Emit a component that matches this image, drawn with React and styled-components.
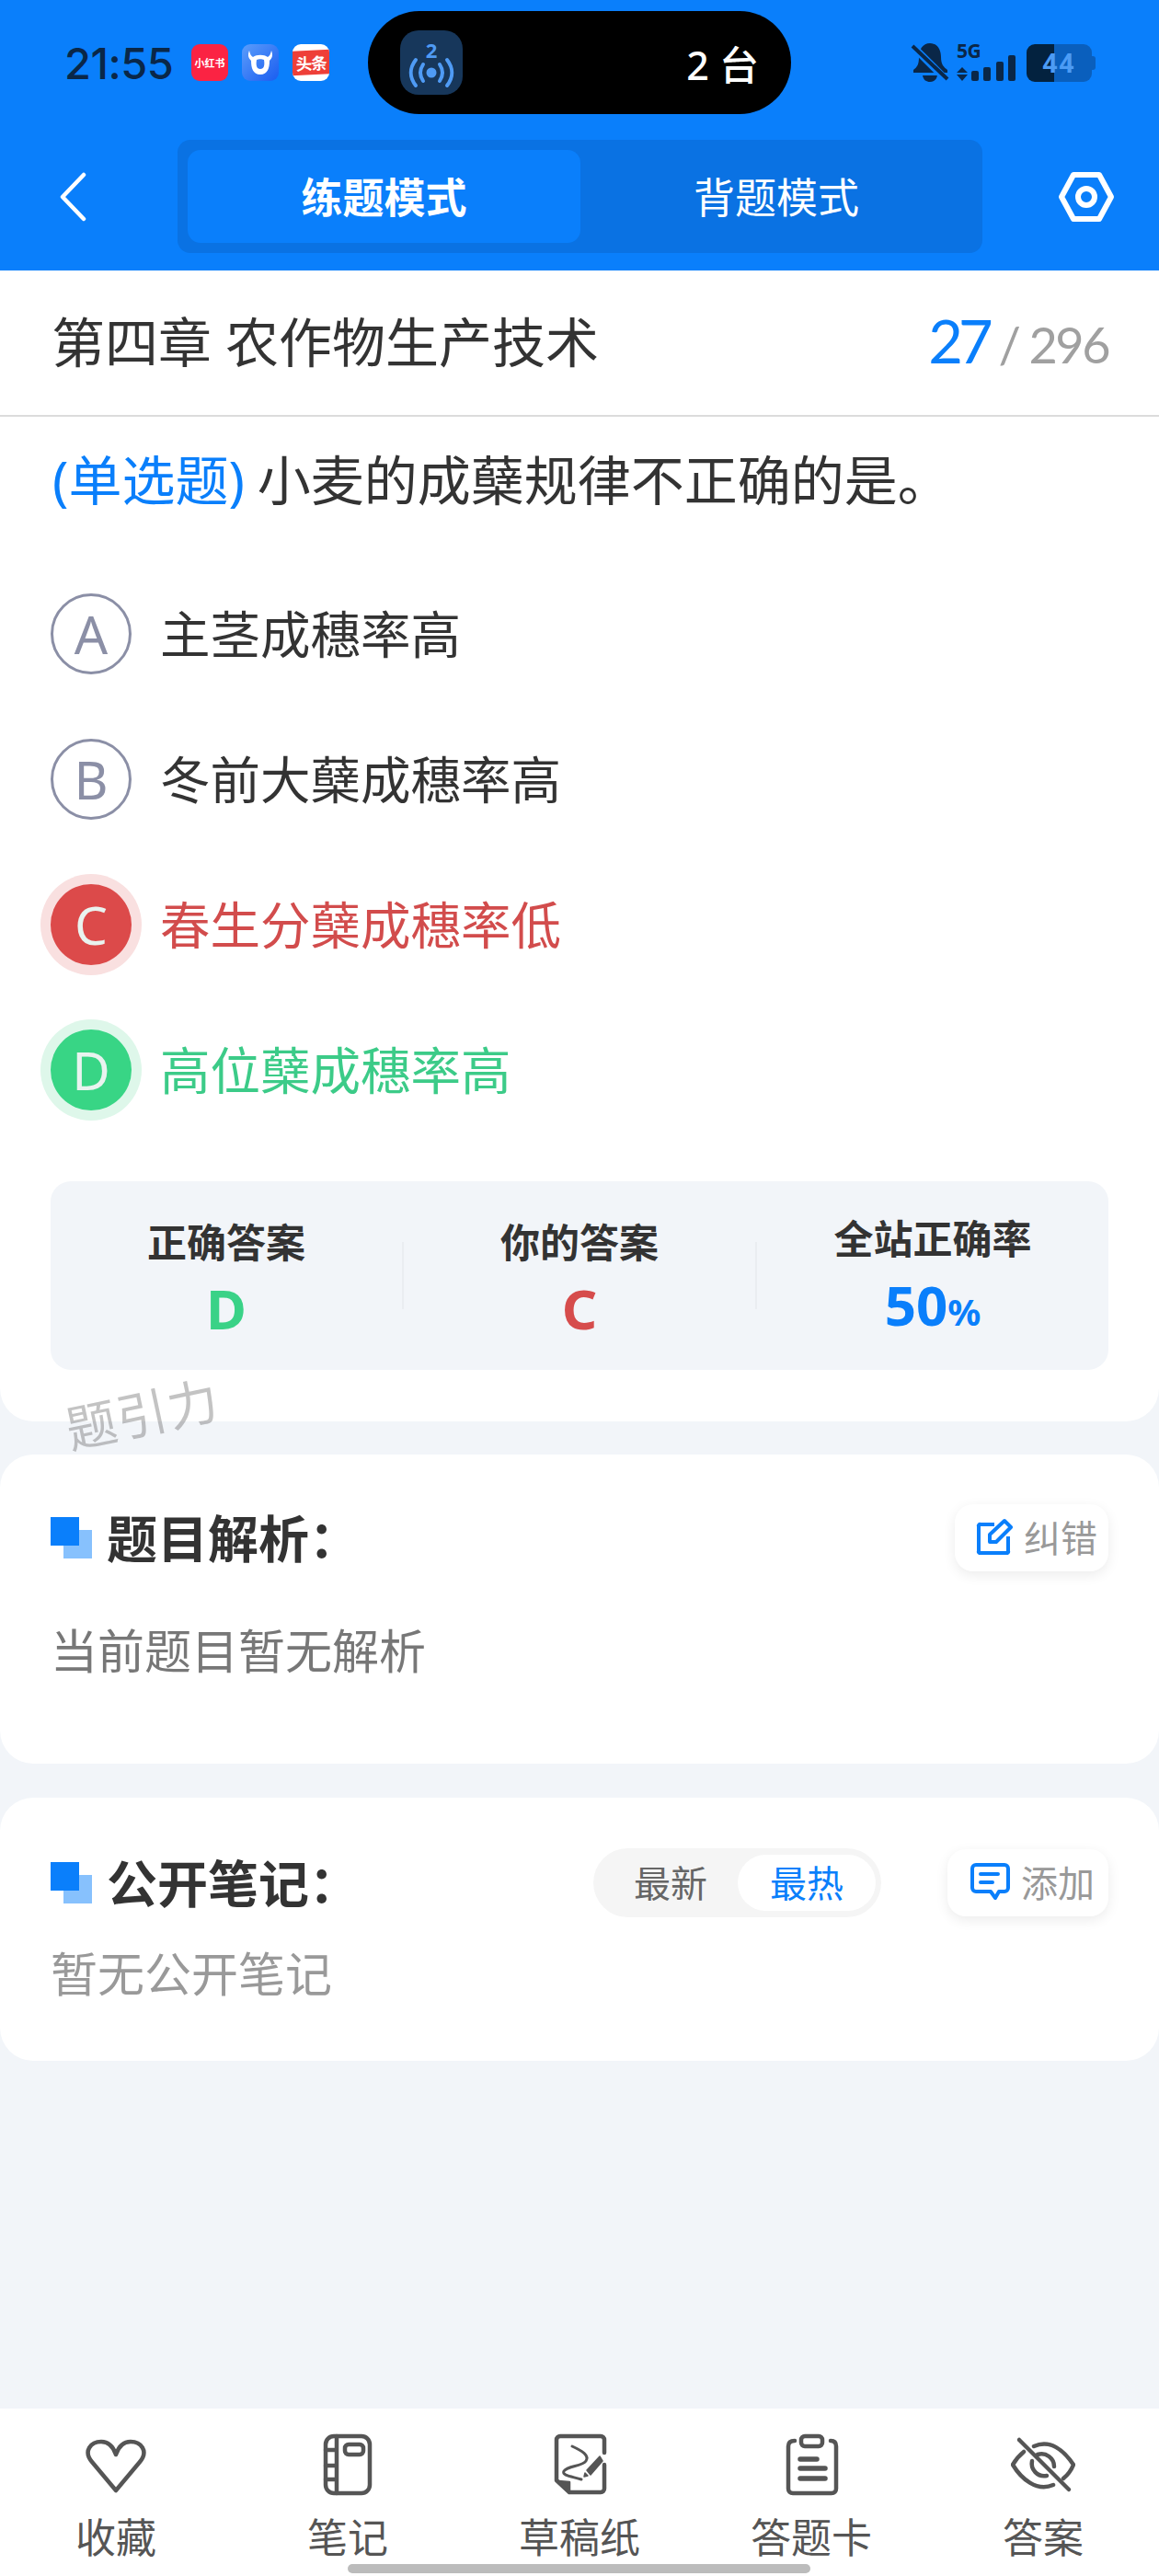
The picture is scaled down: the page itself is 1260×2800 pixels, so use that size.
import React from 'react'
import styled, {createGlobalStyle} from 'styled-components'

const BLUE = '#0a7ffb'
const RED = '#d64c4c'
const GREEN = '#3ad287'
const INK = '#0a2748'

const Global = createGlobalStyle`
  html, body { margin: 0; padding: 0; background: #f2f5f9; }
  * { box-sizing: border-box; }
  body { font-family: "Noto Sans", "Noto Sans CJK SC", sans-serif; }
`

const Page = styled.div`
  width: 1260px;
  height: 2800px;
  display: flex;
  flex-direction: column;
  position: relative;
  overflow: hidden;
  background: #f2f5f9;
`

//-- top blue block
const Top = styled.header`
  background: ${BLUE};
  height: 294px;
`

const StatusBar = styled.div`
  height: 152px;
  padding: 12px 0 28px 70px;
  display: flex;
  align-items: center;
`

const Clock = styled.div`
  width: 138px;
  font: 500 47px/1 "Inter", sans-serif;
  letter-spacing: -0.5px;
  color: ${INK};
`

const AppIcons = styled.div`
  width: 192px;
  display: flex;
  gap: 15px;
`

const AppIcon = styled.div`
  width: 40px;
  height: 40px;
  border-radius: 9px;
  background: ${p => p.$bg};
  color: #fff;
  display: flex;
  align-items: center;
  justify-content: center;
  overflow: hidden;
  white-space: nowrap;
  font-size: 11px;
  font-weight: 700;
`

const Banner = styled.div`
  width: 100%;
  height: 24px;
  background: #ee3f38;
  transform: rotate(-3deg) scale(1.1);
  display: flex;
  align-items: center;
  justify-content: center;
  font-size: 16px;
  letter-spacing: -1px;
`

const Island = styled.div`
  width: 460px;
  height: 112px;
  background: #000;
  border-radius: 56px;
  padding: 0 35px;
  display: flex;
  align-items: center;
  justify-content: space-between;
  color: #fff;
  font-size: 43px;
  font-weight: 500;
`

const IslandBadge = styled.div`
  width: 68px;
  height: 70px;
  border-radius: 20px;
  background: #17375b;
  color: #4f9bf5;
  display: flex;
  flex-direction: column;
  align-items: center;
  font: 700 22px/22px "Noto Sans", sans-serif;
  padding-top: 10px;
  svg { margin-top: -6px; }
`

const StatusRight = styled.div`
  margin-left: auto;
  padding-right: 73px;
  display: flex;
  align-items: center;
  color: ${INK};
`

const NetCol = styled.div`
  width: 66px;
  margin-left: 8px;
  display: flex;
  flex-direction: column;
  svg { margin-top: -3px; display: block; }
`

const NetLabel = styled.div`
  height: 15px;
  font: 700 21px/15px "Noto Sans", sans-serif;
  letter-spacing: -0.5px;
`

const Battery = styled.div`
  width: 71px;
  height: 41px;
  margin-left: 10px;
  border-radius: 9px;
  position: relative;
  background: linear-gradient(90deg, #03223f 0 30px, #0a5fbd 30px 100%);
  color: #4c9cf5;
  font: 700 28px/41px "Noto Sans", sans-serif;
  text-align: center;
  letter-spacing: 2px;
  &::after {
    content: "";
    position: absolute;
    right: -4px;
    top: 13px;
    width: 4px;
    height: 15px;
    border-radius: 0 3px 3px 0;
    background: #0a5fbd;
  }
`

const NavBar = styled.nav`
  height: 142px;
  display: flex;
  align-items: flex-start;
`

const BackSlot = styled.div`
  width: 193px;
  height: 123px;
  padding-left: 64px;
  display: flex;
  align-items: center;
`

const Segments = styled.div`
  width: 875px;
  height: 123px;
  padding: 11px;
  background: #0a72e3;
  border-radius: 14px;
  display: flex;
`

const Segment = styled.div`
  width: ${p => p.$active ? 427 : 426}px;
  border-radius: 14px;
  background: ${p => p.$active ? BLUE : 'transparent'};
  color: #fff;
  font-size: 45px;
  font-weight: ${p => p.$active ? 700 : 400};
  padding-bottom: 2px;
  display: flex;
  align-items: center;
  justify-content: center;
`

const GearSlot = styled.div`
  flex: 1;
  height: 123px;
  padding-left: 82px;
  display: flex;
  align-items: center;
`

//-- question card
const Card = styled.section`
  background: #fff;
  border-radius: ${p => p.$first ? '0 0 36px 36px' : '36px'};
  height: ${p => p.$h}px;
  margin-bottom: ${p => p.$mb || 0}px;
  padding: ${p => p.$pad || '0 55px'};
`

const ChapterRow = styled.div`
  height: 159px;
  margin: 0 -55px;
  padding: 0 55px 0 56px;
  border-bottom: 2px solid #dcdcdc;
  display: flex;
  align-items: center;
  justify-content: space-between;
`

const Chapter = styled.h1`
  margin: 0 0 8px;
  font-size: 58px;
  font-weight: 400;
  color: #333;
`

const Counter = styled.div`
  font: 400 54px/1 "Lato", sans-serif;
  letter-spacing: -2.5px;
  color: #a0a0a0;
  margin-bottom: 4px;
  display: flex;
  align-items: baseline;
  gap: 11px;
`

const Current = styled.span`
  font-size: 65px;
  letter-spacing: -5px;
  color: ${BLUE};
`

const Question = styled.p`
  margin: 29px 0 83px 2px;
  font-size: 58px;
  line-height: 80px;
  color: #333;
  white-space: nowrap;
`

const Kind = styled.span`
  color: ${BLUE};
  margin-right: 14px;
`

const Options = styled.div`
  display: flex;
  flex-direction: column;
  gap: 70px;
`

const Option = styled.div`
  display: flex;
  align-items: center;
  gap: 31px;
  height: 88px;
  font-size: 54.5px;
  color: ${p => p.$state === 'wrong' ? '#d24c4c' : p.$state === 'right' ? '#3ccb88' : '#333'};
`

const OptionText = styled.span`
  padding-bottom: 6px;
`

const circleFill = {wrong: '#dc4a4a', right: '#38d585'}
const circleRing = {wrong: '#f9e0e0', right: '#def7ea'}

const Letter = styled.div`
  width: 88px;
  height: 88px;
  border-radius: 50%;
  display: flex;
  align-items: center;
  justify-content: center;
  font-size: 57px;
  font-weight: 400;
  color: ${p => p.$state ? '#e9f3ef' : '#8b8fa6'};
  background: ${p => circleFill[p.$state] || '#fff'};
  border: ${p => p.$state ? 'none' : '3px solid #8b8fa6'};
  box-shadow: ${p => p.$state ? `0 0 0 11px ${circleRing[p.$state]}` : 'none'};
`

const Stats = styled.div`
  margin-top: 77px;
  height: 205px;
  background: #f2f5f9;
  border-radius: 22px;
  display: flex;
  align-items: center;
`

const Stat = styled.div`
  flex: 1;
  display: flex;
  flex-direction: column;
  align-items: center;
  gap: 11px;
`

const StatLabel = styled.div`
  font-size: 43px;
  line-height: 60px;
  font-weight: 700;
  color: #333;
`

const StatValue = styled.div`
  font-size: 60px;
  line-height: 60px;
  font-weight: 700;
  color: ${p => p.$color};
`

const Percent = styled.span`
  font-size: 40px;
`

const StatLine = styled.div`
  width: 2px;
  height: 73px;
  background: #eaedf1;
`

const Watermark = styled.div`
  position: absolute;
  left: 70px;
  top: 1494px;
  font-size: 55px;
  font-weight: 400;
  color: rgba(90, 90, 90, 0.36);
  transform: rotate(-12deg);
  letter-spacing: 1px;
`

//-- lower cards
const SectionHead = styled.div`
  display: flex;
  align-items: center;
  height: ${p => p.$h}px;
`

const Squares = styled.div`
  position: relative;
  width: 46px;
  height: 46px;
  margin-right: 15px;
  flex: none;
  &::before {
    content: "";
    position: absolute;
    left: 14px;
    top: 14px;
    width: 31px;
    height: 31px;
    background: #87c1fd;
  }
  &::after {
    content: "";
    position: absolute;
    left: 0;
    top: 0;
    width: 31px;
    height: 31px;
    background: ${BLUE};
  }
`

const SectionTitle = styled.h2`
  margin: 0 0 6px;
  font-size: 55px;
  font-weight: 700;
  color: #333;
`

const Chip = styled.div`
  margin-left: ${p => p.$ml || 'auto'};
  height: 73px;
  width: ${p => p.$w}px;
  padding: 0 0 3px ${p => p.$pl}px;
  border-radius: 20px;
  background: #fff;
  box-shadow: 0 4px 14px rgba(0, 0, 0, 0.08);
  display: flex;
  align-items: center;
  gap: 12px;
  font-size: 40px;
  color: #999;
`

const Toggle = styled.div`
  margin-left: auto;
  width: 313px;
  height: 75px;
  border-radius: 38px;
  background: #f5f5f5;
  padding: 7px 6px 7px 44px;
  display: flex;
  align-items: center;
  justify-content: space-between;
  font-size: 40px;
  color: #666;
`

const ToggleOff = styled.span`
  padding-bottom: 4px;
`

const ToggleOn = styled.div`
  width: 150px;
  height: 61px;
  padding-bottom: 4px;
  border-radius: 31px;
  background: #fff;
  color: ${BLUE};
  display: flex;
  align-items: center;
  justify-content: center;
`

const Muted = styled.p`
  margin: ${p => p.$m};
  font-size: 51px;
  line-height: 70px;
  color: ${p => p.$color};
`

//-- bottom tabs
const TabBar = styled.footer`
  position: absolute;
  left: 0;
  right: 0;
  bottom: 0;
  height: 182px;
  background: #fff;
  display: flex;
`

const Tab = styled.div`
  flex: 1;
  display: flex;
  flex-direction: column;
  align-items: center;
  padding-top: 26px;
  font-size: 44px;
  line-height: 60px;
  color: #555;
  svg { margin-bottom: 14px; }
`

const HomeBar = styled.div`
  position: absolute;
  left: 378px;
  bottom: 3px;
  width: 503px;
  height: 10px;
  border-radius: 5px;
  background: #bcbcbc;
`

const Line = {fill: 'none', stroke: '#555', strokeWidth: 4.5, strokeLinecap: 'round', strokeLinejoin: 'round'}

const Heart = () => (
  <svg width="70" height="70" viewBox="0 0 70 70" {...Line}>
    <path d="M35 63 L9 32 C-1 20 8 10 19 10 C26 10 32 15 35 24 C38 15 44 10 51 10 C62 10 71 20 61 32 Z"/>
  </svg>
)

const Notebook = () => (
  <svg width="70" height="70" viewBox="0 0 70 70" {...Line}>
    <rect x="11" y="4" width="48" height="62" rx="9"/>
    <path d="M23 4 V66 M11 19 H23 M11 36 H23 M11 51 H23"/>
    <rect x="32" y="13" width="20" height="11" rx="4"/>
  </svg>
)

const Draft = () => (
  <svg width="70" height="70" viewBox="0 0 70 70" {...Line}>
    <path d="M62 22 V8 A4 4 0 0 0 58 4 H14 A4 4 0 0 0 10 8 V52 L24 65 H58 A4 4 0 0 0 62 61 V35"/>
    <path d="M12 53 L24 54 L24 64 Z" fill="#555" strokeWidth="2.5"/>
    <path d="M27 15 C38 20 46 25 42 31 C38 37 22 36 18 42 C15 47 28 48 37 51" strokeWidth="3"/>
    <path d="M43 41 L57 26 L60 31 L47 46 Z" fill="#555" strokeWidth="1.5"/>
    <path d="M41 44 L40 48 L44 47 Z" fill="#555" strokeWidth="1.5"/>
  </svg>
)

const Clipboard = () => (
  <svg width="70" height="70" viewBox="0 0 70 70" {...Line}>
    <path d="M17 9 C12 9 10 11 10 15 V61 C10 64 12 66 15 66 H57 C60 66 62 64 62 61 V15 C62 11 60 9 56 9"/>
    <rect x="24" y="4" width="23" height="11" rx="4"/>
    <path d="M23 29 H41 M23 39 H50 M23 50 H50" strokeWidth="5.5"/>
  </svg>
)

const EyeOff = () => (
  <svg width="70" height="70" viewBox="0 0 70 70" {...Line}>
    <path d="M9 8 L63 62"/>
    <path d="M25 15 C43 7 58 20 68 35 C66 40 62 46 57 50"/>
    <path d="M46 57 C28 65 11 50 2 35 C5 30 9 25 14 21"/>
    <path d="M29 24 C38 21 47 28 47 37"/>
    <path d="M23 31 C21 40 29 49 39 47"/>
  </svg>
)

const BackIcon = () => (
  <svg width="30" height="54" viewBox="0 0 30 54" fill="none" stroke="#fff" strokeWidth="4.5" strokeLinecap="round" strokeLinejoin="round">
    <path d="M27 3 L4 27 L27 51"/>
  </svg>
)

const HexIcon = () => (
  <svg width="62" height="56" viewBox="0 0 62 56" fill="none" stroke="#fff" strokeWidth="6" strokeLinejoin="round">
    <path d="M17 4 H45 L58 28 L45 52 H17 L4 28 Z"/>
    <circle cx="31" cy="28" r="9"/>
  </svg>
)

const CowIcon = () => (
  <svg width="30" height="30" viewBox="0 0 30 30" fill="#fff">
    <path d="M3 2 C4 6 5 8 7 9 C11 6 19 6 23 9 C25 8 26 6 27 2 C29 7 28 10 25 13 C25 21 23 28 15 28 C7 28 5 21 5 13 C2 10 1 7 3 2 Z M11 12 C10 18 11 22 15 22 C19 22 20 18 19 12 C17 11 13 11 11 12 Z" fillRule="evenodd"/>
  </svg>
)

const BroadcastIcon = () => (
  <svg width="56" height="40" viewBox="0 0 56 40" fill="none" stroke="#4f9bf5" strokeWidth="4" strokeLinecap="round">
    <circle cx="28" cy="20" r="5.5" fill="#4f9bf5" stroke="none"/>
    <path d="M19 11 C15 17 15 23 19 29 M37 11 C41 17 41 23 37 29"/>
    <path d="M11 6 C4 15 4 25 11 34 M45 6 C52 15 52 25 45 34"/>
  </svg>
)

const MuteBell = () => (
  <svg width="42" height="44" viewBox="0 0 42 44" fill={INK}>
    <path d="M21 1 C29 1 33 8 33 16 C33 24 36 27 40 30 V33 H3 V30 C7 27 9 24 9 16 C9 8 13 1 21 1 Z"/>
    <path d="M13 36 H29 C28 41 25 43 21 43 C17 43 14 41 13 36 Z"/>
    <path d="M1 3 L39 41" stroke={BLUE} strokeWidth="8"/>
    <path d="M2 4 L40 40" stroke={INK} strokeWidth="4"/>
  </svg>
)

const SignalBars = () => (
  <svg width="66" height="28" viewBox="0 0 66 28" fill={INK}>
    <path d="M6 13 L12 19 H0 Z M0 21 H12 L6 28 Z"/>
    <rect x="16" y="17" width="8" height="11" rx="2"/>
    <rect x="29" y="13" width="8" height="15" rx="2"/>
    <rect x="43" y="7" width="8" height="21" rx="2"/>
    <rect x="56" y="0" width="8" height="28" rx="2"/>
  </svg>
)

const EditIcon = () => (
  <svg width="40" height="40" viewBox="0 0 40 40" fill="none" stroke={BLUE} strokeWidth="4" strokeLinejoin="round">
    <path d="M20 7 H5 A1.5 1.5 0 0 0 3 9 V36 A1.5 1.5 0 0 0 5 38 H33 A1.5 1.5 0 0 0 35 36 V20"/>
    <path d="M15 26 L15 18 L31 3 L38 10 L22 26 Z"/>
  </svg>
)

const NoteIcon = () => (
  <svg width="43" height="40" viewBox="0 0 43 40" fill="none" stroke={BLUE} strokeWidth="4" strokeLinecap="round" strokeLinejoin="round">
    <path d="M6 2 H37 A4 4 0 0 1 41 6 V27 A4 4 0 0 1 37 31 H31 L27 38 L22 31 H6 A4 4 0 0 1 2 27 V6 A4 4 0 0 1 6 2 Z"/>
    <path d="M11 12 H30 M11 21 H24"/>
  </svg>
)

const options = [
  {key: 'A', text: '主茎成穗率高'},
  {key: 'B', text: '冬前大蘖成穗率高'},
  {key: 'C', text: '春生分蘖成穗率低', state: 'wrong'},
  {key: 'D', text: '高位蘖成穗率高', state: 'right'},
]

const tabs = [
  {label: '收藏', icon: <Heart/>},
  {label: '笔记', icon: <Notebook/>},
  {label: '草稿纸', icon: <Draft/>},
  {label: '答题卡', icon: <Clipboard/>},
  {label: '答案', icon: <EyeOff/>},
]

const App = () => {
  return (
    <Page>
      <Global/>
      <Top>
        <StatusBar>
          <Clock>21:55</Clock>
          <AppIcons>
            <AppIcon $bg="#fb2343">小红书</AppIcon>
            <AppIcon $bg="linear-gradient(135deg, #5b9dfb, #1a5df0)"><CowIcon/></AppIcon>
            <AppIcon $bg="#fff"><Banner>头条</Banner></AppIcon>
          </AppIcons>
          <Island>
            <IslandBadge>2<BroadcastIcon/></IslandBadge>
            <span>2 台</span>
          </Island>
          <StatusRight>
            <MuteBell/>
            <NetCol><NetLabel>5G</NetLabel><SignalBars/></NetCol>
            <Battery>44</Battery>
          </StatusRight>
        </StatusBar>
        <NavBar>
          <BackSlot><BackIcon/></BackSlot>
          <Segments>
            <Segment $active>练题模式</Segment>
            <Segment>背题模式</Segment>
          </Segments>
          <GearSlot><HexIcon/></GearSlot>
        </NavBar>
      </Top>

      <Card $first $h={1251} $mb={36}>
        <ChapterRow>
          <Chapter>第四章 农作物生产技术</Chapter>
          <Counter><Current>27</Current><span>/</span><span>296</span></Counter>
        </ChapterRow>
        <Question><Kind>(单选题)</Kind>小麦的成蘖规律不正确的是。</Question>
        <Options>
          {options.map(o => (
            <Option key={o.key} $state={o.state}>
              <Letter $state={o.state}>{o.key}</Letter>
              <OptionText>{o.text}</OptionText>
            </Option>
          ))}
        </Options>
        <Stats>
          <Stat><StatLabel>正确答案</StatLabel><StatValue $color={GREEN}>D</StatValue></Stat>
          <StatLine/>
          <Stat><StatLabel>你的答案</StatLabel><StatValue $color={RED}>C</StatValue></Stat>
          <StatLine/>
          <Stat><StatLabel>全站正确率</StatLabel><StatValue $color={BLUE}>50<Percent>%</Percent></StatValue></Stat>
        </Stats>
      </Card>
      <Watermark>题引力</Watermark>

      <Card $h={336} $mb={37} $pad="54px 55px 0">
        <SectionHead $h={73}>
          <Squares/>
          <SectionTitle>题目解析：</SectionTitle>
          <Chip $w={167} $pl={23}><EditIcon/>纠错</Chip>
        </SectionHead>
        <Muted $m="51px 0 0" $color="#777">当前题目暂无解析</Muted>
      </Card>

      <Card $h={286} $pad="55px 55px 0">
        <SectionHead $h={75}>
          <Squares/>
          <SectionTitle>公开笔记：</SectionTitle>
          <Toggle><ToggleOff>最新</ToggleOff><ToggleOn>最热</ToggleOn></Toggle>
          <Chip $w={175} $ml="72px" $pl={25}><NoteIcon/>添加</Chip>
        </SectionHead>
        <Muted $m="26px 0 0" $color="#999">暂无公开笔记</Muted>
      </Card>

      <TabBar>
        {tabs.map(t => <Tab key={t.label}>{t.icon}{t.label}</Tab>)}
      </TabBar>
      <HomeBar/>
    </Page>
  )
}

export default App
